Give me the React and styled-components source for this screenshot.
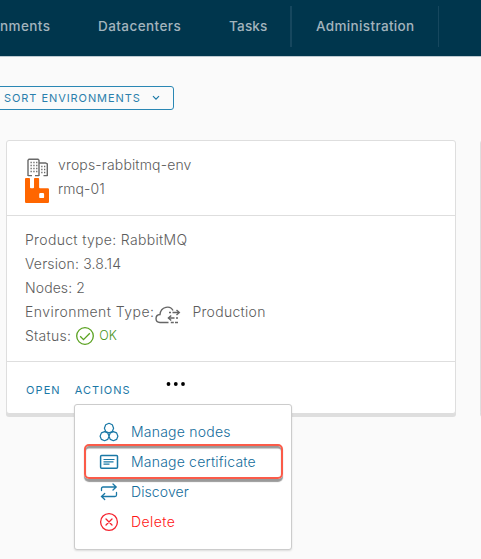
import React from 'react';
import styled, { createGlobalStyle } from 'styled-components';

const GlobalStyle = createGlobalStyle`
  * { box-sizing: border-box; }
  body {
    margin: 0;
    width: 481px;
    height: 559px;
    overflow: hidden;
    background: #fafafa;
    color: #5c5c5c;
    font-family: Inter, "Open Sans", sans-serif;
    font-size: 14px;
    font-weight: 300;
    line-height: 24px;
  }
  svg { display: block; flex: none; }
`;

const Page = styled.div`
  position: relative;
  width: 481px;
  height: 559px;
  overflow: hidden;
`;

const NavBar = styled.nav`
  display: flex;
  height: 57px;
  padding-top: 6px;
  background: #00364d;
  border-bottom: 1px solid #bccad1;
`;

const NavItem = styled.a`
  width: ${(p) => p.$width}px;
  height: 41px;
  padding-left: ${(p) => p.$indent}px;
  flex: none;
  border-right: ${(p) => (p.$rule ? `${p.$rule}px solid #16475e` : 'none')};
  color: #a3b4bd;
  font-weight: 500;
  font-size: 13.5px;
  line-height: 41px;
  letter-spacing: ${(p) => p.$track || 0}px;
  white-space: nowrap;
`;

const SortButton = styled.button`
  display: flex;
  align-items: center;
  width: 184px;
  height: 24px;
  margin: 29px 0 0 -10px;
  padding: 0 13px;
  justify-content: space-between;
  border: 1px solid #2a87b4;
  border-radius: 3px;
  background: transparent;
  color: #2a7fac;
  font: 400 11px Inter, sans-serif;
  letter-spacing: 0.93px;
  white-space: nowrap;
`;

const CardRow = styled.main`
  display: flex;
  gap: 24px;
  margin: 30px 0 0 6px;
`;

const Card = styled.section`
  flex: none;
  width: 450px;
  height: 274px;
  border: 1px solid #dedede;
  border-radius: 3px;
  background: #fff;
  box-shadow: 0 3px 0 #dedede;
`;

const CardHeader = styled.header`
  height: 75px;
  padding: 12px 18px 0;
  border-bottom: 1px solid #dedede;
`;

const TitleRow = styled.div`
  display: flex;
  align-items: center;
  height: 24px;
  gap: 8px;
`;

const IconSlot = styled.span`
  display: flex;
  width: 25px;
  height: 24px;
  padding-top: ${(p) => p.$drop}px;
  align-items: flex-start;
`;

const CardBody = styled.div`
  height: 146px;
  padding: 12px 18px 0;
  border-bottom: 1px solid #dedede;
`;

const Detail = styled.div`
  display: flex;
  align-items: center;
  height: 24px;
  white-space: nowrap;
`;

const Label = styled.span`
  letter-spacing: ${(p) => p.$track || 0}px;
`;

const Environment = styled.span`
  display: flex;
  align-items: center;
  gap: 11px;
  margin-left: 1px;
`;

const CloudSlot = styled.span`
  padding-top: 6px;
`;

const Status = styled.span`
  display: flex;
  align-items: center;
  gap: 5px;
  margin-left: 5px;
  color: #4a9420;
  font-size: 12.5px;
`;

const CardFooter = styled.footer`
  display: flex;
  align-items: flex-start;
  padding: 16px 19px 0;
  gap: 14px;
`;

const LinkButton = styled.button`
  padding: 0;
  border: 0;
  background: none;
  color: #1a78a6;
  font: 400 11px/24px Inter, sans-serif;
  letter-spacing: ${(p) => p.$track}px;
`;

const MoreIcon = styled.span`
  margin: 4px 0 0 22px;
`;

const Menu = styled.ul`
  position: absolute;
  left: 74px;
  top: 404px;
  width: 218px;
  height: 146px;
  margin: 0;
  padding: 12px 0 0 24px;
  list-style: none;
  border: 1px solid #ccc;
  border-radius: 3px;
  background: #fff;
  box-shadow: 0 1px 2px rgba(0, 0, 0, 0.12);
`;

const MenuItem = styled.li`
  display: flex;
  align-items: center;
  height: 30px;
  gap: 12px;
  color: ${(p) => (p.$danger ? '#ff1515' : '#126c9b')};
  white-space: nowrap;
`;

const Highlight = styled.div`
  position: absolute;
  left: 84px;
  top: 444px;
  width: 199px;
  height: 35px;
  border: 2px solid #fb5b49;
  border-radius: 5px;
  box-shadow: 0 2.5px 1px #999, inset 0 2.5px 1px #999;
`;

const Chevron = () => (
  <svg width="8" height="6" viewBox="0 0 8 6" fill="none" stroke="#1a78a6" strokeWidth="1.2">
    <path d="M1 1.2 4 4.2 7 1.2" />
  </svg>
);

const BuildingsIcon = () => (
  <svg width="25" height="19" viewBox="0 0 25 19" fill="none" stroke="#696969" strokeWidth="1.4">
    <path d="M3 18V2.200l1-1h9l1 1V18M14.500 5h6l1.800 1v12M3 17.600h4M10 17.600h4M18.500 17.600h4" />
    <path d="M5.500 4.500h7M5.500 7.500h7M5.500 10.500h7M5.500 13.500h7M16.200 8.500h5M16.200 11.500h5M16.200 14.500h5" strokeDasharray="1.300 1.500" />
  </svg>
);

const RabbitIcon = () => (
  <svg width="24" height="25" viewBox="0 0 25 25" preserveAspectRatio="none">
    <path
      fill="#ff6600"
      fillRule="evenodd"
      d="M1 0h3.400q.8 0 .8.8v8.400q0 1 1 1h2.200q1 0 1-1V.8q0-.8.8-.8h3.700q.8 0 .8.8v8.400q0 1 1 1h8.100q1.200 0 1.200 1.200v12.400q0 1.200-1.200 1.200H1.200Q0 25 0 23.800V1Q0 0 1 0ZM16 15q-1.200 0-1.200 1.200v2.700q0 1.200 1.200 1.200h2.700q1.200 0 1.200-1.200v-2.700q0-1.200-1.200-1.200Z"
    />
  </svg>
);

const CloudIcon = () => (
  <svg width="26" height="18" viewBox="0 0 26 18" fill="none" stroke="#666" strokeWidth="1.4">
    <path d="M13.500 16.500H5C-.3 16.300-.3 8.800 5 8.500 5.800 0 15.500-.8 18 4.500" />
    <path d="M23 16.500h-8" strokeDasharray="3 1.200" />
    <path d="M14 6.500h2M17.500 6.500H24M23 12h-2M19.500 12H13.500" />
    <path d="m21.500 4 2.800 2.500L21.500 9M16.200 9.500 13.400 12l2.800 2.500" />
  </svg>
);

const CheckIcon = () => (
  <svg width="18" height="18" viewBox="0 0 18 18" fill="none" stroke="#5aa220" strokeWidth="1.3">
    <circle cx="9" cy="9" r="8.300" />
    <path d="m4.200 9.300 3.300 3.300 6.300-6.300" />
  </svg>
);

const DotsIcon = () => (
  <svg width="20" height="4" viewBox="0 0 20 4" fill="#000">
    <circle cx="2.500" cy="2" r="1.900" />
    <circle cx="9.800" cy="2" r="1.900" />
    <circle cx="17" cy="2" r="1.900" />
  </svg>
);

const NodesIcon = () => (
  <svg width="20" height="20" viewBox="0 0 20 20" fill="none" stroke="#1a78a6" strokeWidth="1.2" strokeLinejoin="round">
    <path d="m10 1.300 3.300 1.500 1.300 3.400-1.300 3.300-3.300 1.400-3.300-1.400-1.300-3.300 1.300-3.400Z" />
    <path d="m5.600 9.600 3.100 1.300L10 14.200l-1.300 3.200-3.100 1.300-3.200-1.300-1.300-3.200 1.300-3.300ZM14.400 9.600l3.200 1.300 1.300 3.300-1.300 3.200-3.200 1.300-3.100-1.300L10 14.200l1.300-3.300Z" />
  </svg>
);

const CertificateIcon = () => (
  <svg width="20" height="20" viewBox="0 0 20 20" fill="none" stroke="#1a78a6" strokeWidth="1.200">
    <rect x="1.600" y="3.500" width="16.900" height="12.800" rx="1" strokeWidth="1.500" />
    <path d="M4.500 7.500h11M4.500 9.800h10M4.500 12.200h6" />
  </svg>
);

const DiscoverIcon = () => (
  <svg width="20" height="20" viewBox="0 0 20 20" fill="none" stroke="#1a78a6" strokeWidth="1.300" strokeLinecap="round">
    <path d="M2.500 8.500V6.500q0-1.500 1.500-1.500h13M14 2l3.200 3L14 8M17.500 10.500v2.500q0 1.500-1.500 1.500H2.500M5.700 11.500l-3.200 3 3.200 3" />
  </svg>
);

const DeleteIcon = () => (
  <svg width="20" height="20" viewBox="0 0 20 20" fill="none" stroke="#f5222d" strokeWidth="1.300" strokeLinecap="round">
    <circle cx="10" cy="10" r="8.400" />
    <path d="m7 7 6 6M13 7l-6 6" />
  </svg>
);

const menuItems = [
  { text: 'Manage nodes', Icon: NodesIcon, track: 0.22 },
  { text: 'Manage certificate', Icon: CertificateIcon, track: 0.2 },
  { text: 'Discover', Icon: DiscoverIcon, track: 0.1 },
  { text: 'Delete', Icon: DeleteIcon, track: 0.4, danger: true },
];

export default function App() {
  return (
    <Page>
      <GlobalStyle />
      <NavBar>
        <NavItem $width={98} $indent={0} $track={0.4}>nments</NavItem>
        <NavItem $width={131} $indent={0} $track={0.42}>Datacenters</NavItem>
        <NavItem $width={63} $indent={0} $rule={2} $track={0.2}>Tasks</NavItem>
        <NavItem $width={147} $indent={24} $rule={1} $track={0.35}>Administration</NavItem>
      </NavBar>
      <SortButton>
        SORT ENVIRONMENTS
        <Chevron />
      </SortButton>
      <CardRow>
        <Card>
          <CardHeader>
            <TitleRow>
              <IconSlot $drop={5}><BuildingsIcon /></IconSlot>
              <Label $track={0.15}>vrops-rabbitmq-env</Label>
            </TitleRow>
            <TitleRow>
              <IconSlot $drop={1}><RabbitIcon /></IconSlot>
              <Label $track={0.1}>rmq-01</Label>
            </TitleRow>
          </CardHeader>
          <CardBody>
            <Detail><Label $track={0.33}>Product type: RabbitMQ</Label></Detail>
            <Detail><Label $track={0.15}>Version: 3.8.14</Label></Detail>
            <Detail><Label $track={0.1}>Nodes: 2</Label></Detail>
            <Detail>
              <Label $track={0.45}>Environment Type:</Label>
              <Environment>
                <CloudSlot><CloudIcon /></CloudSlot>
                <Label $track={0.3}>Production</Label>
              </Environment>
            </Detail>
            <Detail>
              <Label $track={0.25}>Status:</Label>
              <Status><CheckIcon />OK</Status>
            </Detail>
          </CardBody>
          <CardFooter>
            <LinkButton $track={1.1}>OPEN</LinkButton>
            <LinkButton $track={0.95}>ACTIONS</LinkButton>
            <MoreIcon><DotsIcon /></MoreIcon>
          </CardFooter>
        </Card>
        <Card />
      </CardRow>
      <Menu>
        {menuItems.map(({ text, Icon, track, danger }) => (
          <MenuItem key={text} $danger={danger}>
            <Icon />
            <Label $track={track}>{text}</Label>
          </MenuItem>
        ))}
      </Menu>
      <Highlight />
    </Page>
  );
}
